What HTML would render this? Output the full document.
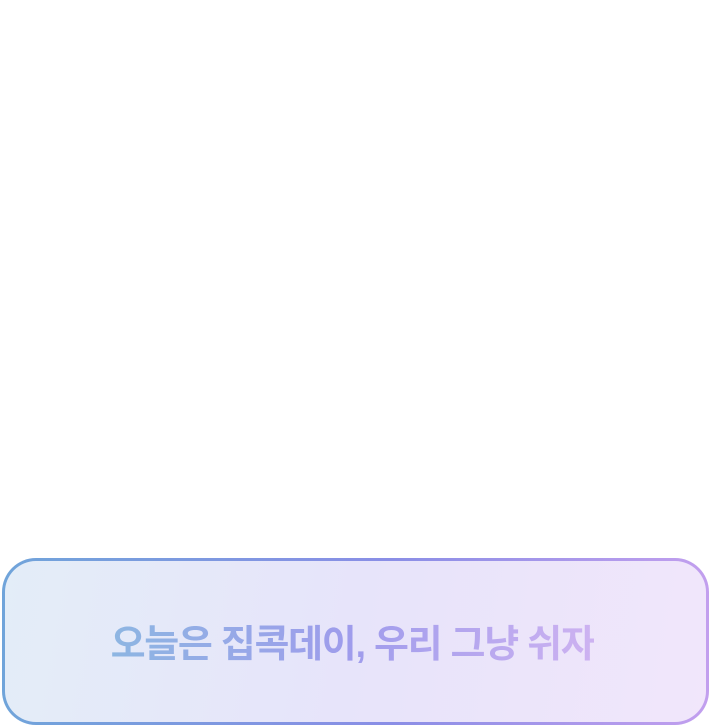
<!DOCTYPE html>
<html><head><meta charset="utf-8"><style>
html,body{margin:0;padding:0;background:#fff;width:709px;height:726px;overflow:hidden}
.b{position:absolute;left:2px;top:558px;width:707px;height:167px;box-sizing:border-box;border-radius:34px;padding:3px;background:linear-gradient(90deg,#70a4da,#8a8ee6 55%,#c29fee)}
.i{width:100%;height:100%;border-radius:31px;background:linear-gradient(100deg,#e3edf8,#e7e4fa 50%,#f1e6fb);display:flex;align-items:center;justify-content:center}
.t{font-family:"Liberation Sans","Noto Sans CJK KR",sans-serif;font-weight:700;font-size:38px;letter-spacing:-1.3px;background:linear-gradient(90deg,#8db6e2,#9f9cec 50%,#cdb2f1);-webkit-background-clip:text;background-clip:text;color:transparent;margin-top:-2px;margin-left:-6px}
</style></head><body>
<div class="b"><div class="i"><span class="t">오늘은 집콕데이, 우리 그냥 쉬자</span></div></div>
</body></html>
